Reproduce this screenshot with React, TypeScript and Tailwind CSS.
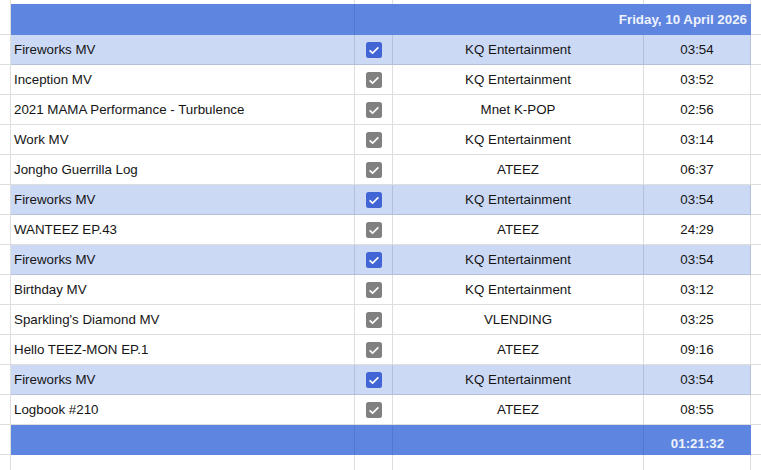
const rows = [
  { name: "Fireworks MV", channel: "KQ Entertainment", time: "03:54", hl: true },
  { name: "Inception MV", channel: "KQ Entertainment", time: "03:52" },
  { name: "2021 MAMA Performance - Turbulence", channel: "Mnet K-POP", time: "02:56" },
  { name: "Work MV", channel: "KQ Entertainment", time: "03:14" },
  { name: "Jongho Guerrilla Log", channel: "ATEEZ", time: "06:37" },
  { name: "Fireworks MV", channel: "KQ Entertainment", time: "03:54", hl: true },
  { name: "WANTEEZ EP.43", channel: "ATEEZ", time: "24:29" },
  { name: "Fireworks MV", channel: "KQ Entertainment", time: "03:54", hl: true },
  { name: "Birthday MV", channel: "KQ Entertainment", time: "03:12" },
  { name: "Sparkling's Diamond MV", channel: "VLENDING", time: "03:25" },
  { name: "Hello TEEZ-MON EP.1", channel: "ATEEZ", time: "09:16" },
  { name: "Fireworks MV", channel: "KQ Entertainment", time: "03:54", hl: true },
  { name: "Logbook #210", channel: "ATEEZ", time: "08:55" },
];

const cols = "grid grid-cols-[11px_344px_38px_251px_107px_1fr]";

function Check({ blue }: { blue?: boolean }) {
  return (
    <svg width="16" height="16" viewBox="0 0 16 16">
      <rect width="16" height="16" rx="2.5" fill={blue ? "#4265d6" : "#808080"} />
      <path d="M3.6 8.3l3 2.8 5.8-5.7" fill="none" stroke="#fff" strokeWidth="1.6" />
    </svg>
  );
}

function Row({ name, channel, time, hl }: { name: string; channel: string; time: string; hl?: boolean }) {
  const line = hl ? "border-[#b4bfd8]" : "border-[#dedede]";
  const bg = hl ? "bg-[#ccd9f5]" : "bg-white";
  return (
    <div className={`${cols} h-[30px]`}>
      <div className="border-r border-b border-[#dedede]" />
      <div className={`${bg} ${line} border-r border-b flex items-center pl-[3px]`}>{name}</div>
      <div className={`${bg} ${line} border-r border-b flex items-center justify-center`}>
        <Check blue={hl} />
      </div>
      <div className={`${bg} ${line} border-r border-b flex items-center justify-center`}>{channel}</div>
      <div className={`${bg} ${line} border-r border-b flex items-center justify-center`}>{time}</div>
      <div className="border-b border-[#dedede]" />
    </div>
  );
}

export default function App() {
  return (
    <div className="w-[761px] h-[470px] overflow-hidden bg-white text-[13.33px] text-[#151515] font-['Liberation_Sans',Arial,sans-serif]">
      <div className={`${cols} h-[4px]`}>
        <div className="border-r border-[#dedede]" />
        <div className="border-r border-[#dedede]" />
        <div className="border-r border-[#dedede]" />
        <div className="border-r border-[#dedede]" />
        <div className="border-r border-[#dedede]" />
      </div>

      <div className={`${cols} h-[31px]`}>
        <div className="border-r border-b border-[#dedede]" />
        <div className="bg-[#5e86e0] border-r border-[#5279d0]" />
        <div className="col-span-3 bg-[#5e86e0] flex items-center justify-end pr-[4px] font-bold text-[#eef3fd]">
          Friday, 10 April 2026
        </div>
        <div className="border-b border-[#dedede]" />
      </div>

      {rows.map((r, i) => (
        <Row key={i} {...r} />
      ))}

      <div className={`${cols} h-[30px]`}>
        <div className="border-r border-b border-[#dedede]" />
        <div className="bg-[#5e86e0] border-r border-[#5279d0]" />
        <div className="bg-[#5e86e0] border-r border-[#5279d0]" />
        <div className="bg-[#5e86e0] border-r border-[#5279d0]" />
        <div className="bg-[#5e86e0] flex items-end justify-center pb-[1px] font-bold text-[#eef3fd]">01:21:32</div>
        <div className="border-b border-[#dedede]" />
      </div>

      <div className={`${cols} h-[15px]`}>
        <div className="border-r border-[#dedede]" />
        <div className="border-r border-[#dedede]" />
        <div className="border-r border-[#dedede]" />
        <div className="border-r border-[#dedede]" />
        <div className="border-r border-[#dedede]" />
      </div>
    </div>
  );
}
